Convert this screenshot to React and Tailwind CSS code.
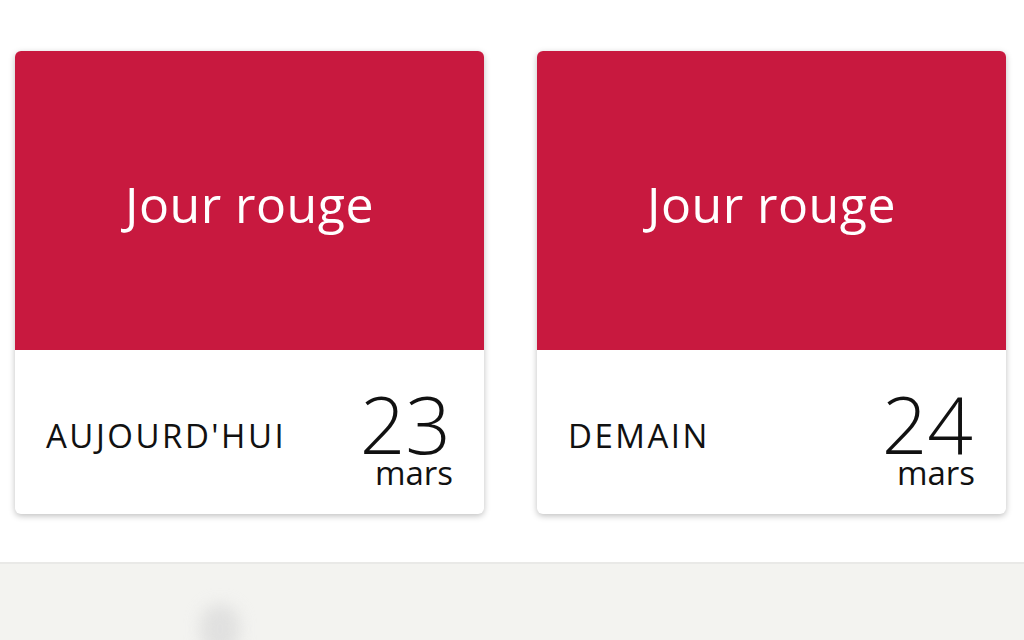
import React from "react";

function Card({ label, day, month }) {
  return (
    <div className="w-[469px] rounded-md bg-white shadow-[0_2px_6px_rgba(0,0,0,0.25)] overflow-hidden">
      <div className="h-[299px] bg-[#c8193f] flex items-center justify-center">
        <span className="text-white text-[50px] leading-none font-normal tracking-[0.5px] mt-[6px]">Jour rouge</span>
      </div>
      <div className="h-[164px] flex items-center justify-between pl-[31px] pr-[31px]">
        <span className="text-[33px] leading-none text-[#111] tracking-[2.5px] mt-[6px]">{label}</span>
        <div className="flex flex-col items-end text-[#111] mt-[16px]">
          <span className="text-[80px] leading-[64px] font-light pr-[2px]">{day}</span>
          <span className="text-[33px] leading-[32px] mt-[2px]">{month}</span>
        </div>
      </div>
    </div>
  );
}

export default function App() {
  return (
    <div className="w-[1024px] h-[640px] bg-white overflow-hidden flex flex-col" style={{ fontFamily: '"Open Sans", "Noto Sans", sans-serif' }}>
      <div className="flex gap-[53px] pl-[15px] pt-[51px]">
        <Card label="AUJOURD'HUI" day="23" month="mars" />
        <Card label="DEMAIN" day="24" month="mars" />
      </div>
      <div className="mt-[48px] flex-1 bg-[#f3f3f0] border-t-2 border-[#e9e9e7] relative">
        <div className="absolute left-[200px] top-[40px] w-[40px] h-[50px] rounded-full bg-[#d9d9d9] blur-[8px] opacity-70" />
      </div>
    </div>
  );
}
